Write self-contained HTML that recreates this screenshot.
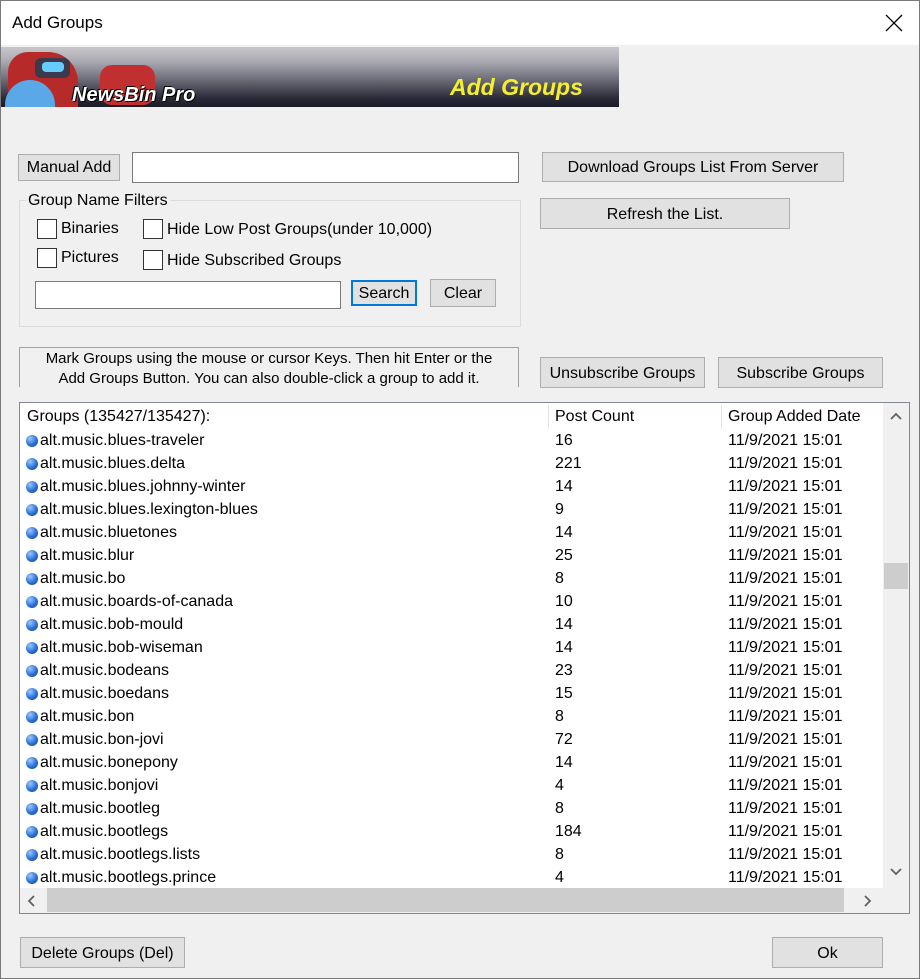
<!DOCTYPE html>
<html><head><meta charset="utf-8"><style>
*{margin:0;padding:0;box-sizing:border-box}
body{width:920px;height:979px;background:#f0f0f0;font-family:"Liberation Sans","DejaVu Sans",sans-serif;font-size:16px;color:#000;position:relative;overflow:hidden}
.a{position:absolute;white-space:nowrap}
.btn{position:absolute;background:#e1e1e1;border:1px solid #adadad;text-align:center;font-size:16px}
.inp{position:absolute;background:#fff;border:1px solid #7a7a7a}
.cb{position:absolute;width:20px;height:20px;background:#fff;border:1px solid #333}
.row{position:absolute;left:0;height:23px;line-height:24px;width:864px}
.dot{position:absolute;left:6px;top:6px;width:12px;height:12px;border-radius:50%;background:radial-gradient(circle at 35% 30%,#9cc8ff,#2a6fd6 55%,#163f8a)}
</style></head><body>
<div class="a" style="left:0;top:0;width:920px;height:979px;border:1px solid #7a7a7a"></div>
<div class="a" style="left:1px;top:1px;width:918px;height:44px;background:#fff"></div>
<div class="a" style="left:12px;top:13px;font-size:17px">Add Groups</div>
<svg class="a" style="left:884px;top:13px" width="20" height="20"><path d="M2 2L18 18M18 2L2 18" stroke="#000" stroke-width="1.3"/></svg>
<div class="a" style="left:1px;top:47px;width:618px;height:60px;background:linear-gradient(#c8c8cc 0%,#a8a8b0 25%,#6b6b78 55%,#2a2a38 85%,#1c1c28 100%)"></div>
<div class="a" style="left:8px;top:52px;width:70px;height:55px;background:#b62a2a;border-radius:20px 30px 0 0"></div>
<div class="a" style="left:35px;top:58px;width:35px;height:20px;background:#3a3a4a;border-radius:6px"></div>
<div class="a" style="left:42px;top:62px;width:22px;height:10px;background:#6cf;border-radius:4px"></div>
<div class="a" style="left:100px;top:65px;width:55px;height:40px;background:#c03030;border-radius:12px"></div>
<div class="a" style="left:5px;top:80px;width:50px;height:27px;background:#5aa8e8;border-radius:25px 25px 0 0"></div>
<div class="a" style="left:72px;top:84px;font-size:20px;font-weight:bold;font-style:italic;color:#fff;text-shadow:1px 1px 0 #000,-1px -1px 0 #000">NewsBin Pro</div>
<div class="a" style="left:450px;top:74px;font-size:23px;font-weight:bold;font-style:italic;color:#f4f030">Add Groups</div>

<div class="btn" style="left:18px;top:154px;width:102px;height:27px;line-height:26px">Manual Add</div>
<div class="inp" style="left:132px;top:152px;width:387px;height:31px"></div>
<div class="btn" style="left:542px;top:152px;width:302px;height:30px;line-height:30px">Download Groups List From Server</div>
<div class="btn" style="left:540px;top:198px;width:250px;height:31px;line-height:31px">Refresh the List.</div>

<div class="a" style="left:19px;top:200px;width:502px;height:127px;border:1px solid #dcdcdc"></div>
<div class="a" style="left:26px;top:192px;background:#f0f0f0;padding:0 2px">Group Name Filters</div>
<div class="cb" style="left:37px;top:219px"></div><div class="a" style="left:61px;top:220px">Binaries</div>
<div class="cb" style="left:37px;top:248px"></div><div class="a" style="left:61px;top:249px">Pictures</div>
<div class="cb" style="left:143px;top:219px"></div><div class="a" style="left:167px;top:221px">Hide Low Post Groups(under 10,000)</div>
<div class="cb" style="left:143px;top:250px"></div><div class="a" style="left:167px;top:252px">Hide Subscribed Groups</div>
<div class="inp" style="left:35px;top:281px;width:306px;height:28px"></div>
<div class="btn" style="left:351px;top:280px;width:66px;height:26px;line-height:24px;border:2px solid #0078d7">Search</div>
<div class="btn" style="left:430px;top:279px;width:66px;height:28px;line-height:28px">Clear</div>

<div class="a" style="left:19px;top:347px;width:500px;height:40px;border:1px solid #a0a0a0;border-bottom:none;text-align:center;line-height:20px;padding-top:1px;font-size:15px">Mark Groups using the mouse or cursor Keys. Then hit Enter or the<br>Add Groups Button. You can also double-click a group to add it.</div>
<div class="btn" style="left:540px;top:357px;width:165px;height:31px;line-height:31px">Unsubscribe Groups</div>
<div class="btn" style="left:718px;top:357px;width:165px;height:31px;line-height:31px">Subscribe Groups</div>

<div class="a" style="left:19px;top:402px;width:891px;height:512px;border:1px solid #828790;background:#fff;overflow:hidden">
 <div class="a" style="left:7px;top:5px">Groups (135427/135427):</div>
 <div class="a" style="left:528px;top:2px;width:1px;height:24px;background:#e5e5e5"></div>
 <div class="a" style="left:535px;top:5px">Post Count</div>
 <div class="a" style="left:701px;top:2px;width:1px;height:24px;background:#e5e5e5"></div>
 <div class="a" style="left:708px;top:5px">Group Added Date</div>
 <div id="rows" class="a" style="left:0;top:26px"></div>
 <div class="a" style="left:863px;top:0;width:26px;height:485px;background:#f0f0f0"></div>
 <svg class="a" style="left:869px;top:8px" width="14" height="10"><path d="M2 8L7 3L12 8" stroke="#606060" stroke-width="1.8" fill="none"/></svg>
 <div class="a" style="left:864px;top:160px;width:24px;height:26px;background:#cdcdcd"></div>
 <svg class="a" style="left:869px;top:464px" width="14" height="10"><path d="M2 2L7 7L12 2" stroke="#606060" stroke-width="1.8" fill="none"/></svg>
 <div class="a" style="left:0;top:485px;width:889px;height:25px;background:#f0f0f0"></div>
 <div class="a" style="left:27px;top:485px;width:797px;height:24px;background:#cdcdcd"></div>
 <svg class="a" style="left:6px;top:491px" width="10" height="14"><path d="M8 2L3 7L8 12" stroke="#606060" stroke-width="1.8" fill="none"/></svg>
 <svg class="a" style="left:843px;top:491px" width="10" height="14"><path d="M2 2L7 7L2 12" stroke="#606060" stroke-width="1.8" fill="none"/></svg>
</div>

<div class="btn" style="left:20px;top:937px;width:165px;height:31px;line-height:31px">Delete Groups (Del)</div>
<div class="btn" style="left:772px;top:937px;width:111px;height:31px;line-height:31px">Ok</div>

<script>
var d=[["alt.music.blues-traveler",16],["alt.music.blues.delta",221],["alt.music.blues.johnny-winter",14],["alt.music.blues.lexington-blues",9],["alt.music.bluetones",14],["alt.music.blur",25],["alt.music.bo",8],["alt.music.boards-of-canada",10],["alt.music.bob-mould",14],["alt.music.bob-wiseman",14],["alt.music.bodeans",23],["alt.music.boedans",15],["alt.music.bon",8],["alt.music.bon-jovi",72],["alt.music.bonepony",14],["alt.music.bonjovi",4],["alt.music.bootleg",8],["alt.music.bootlegs",184],["alt.music.bootlegs.lists",8],["alt.music.bootlegs.prince",4],["alt.music.bootlegs.x",4]];
var h="";d.forEach(function(r,i){h+='<div class="row" style="top:'+(i*23)+'px"><div class="dot"></div><span class="a" style="left:20px">'+r[0]+'</span><span class="a" style="left:535px">'+r[1]+'</span><span class="a" style="left:708px">11/9/2021 15:01</span></div>';});
document.getElementById("rows").innerHTML=h;
</script>
</body></html>
